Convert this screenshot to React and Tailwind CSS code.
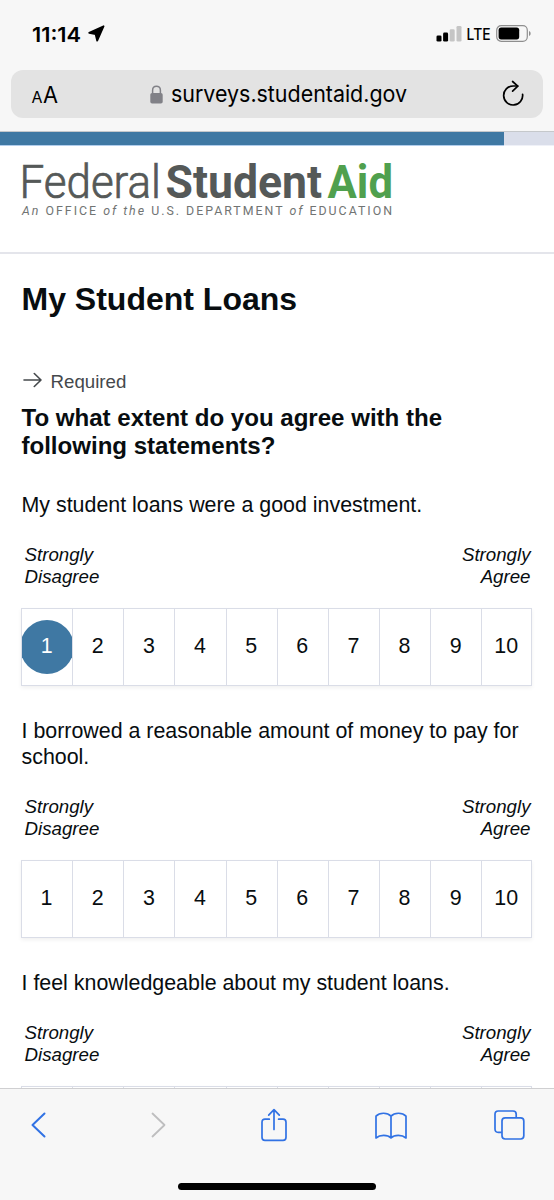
import React from "react"

const questions = [
    { text: "My student loans were a good investment.", selected: 1 },
    { text: "I borrowed a reasonable amount of money to pay for school.", selected: null },
    { text: "I feel knowledgeable about my student loans.", selected: null },
]

const scale = [1, 2, 3, 4, 5, 6, 7, 8, 9, 10]

function StatusBar() {
    return (
        <div className="flex h-[70px] items-center justify-between pl-8 pr-[23px] pt-px font-['Inter',sans-serif] text-black">
            <div className="flex items-center gap-[6px] pb-1">
                <svg className="h-7 w-[50px] overflow-visible" viewBox="0 0 50 28">
                    <text x="0" y="21.5" fontSize="20.6" fontWeight="600" textLength="49" lengthAdjust="spacingAndGlyphs">11:14</text>
                </svg>
                <svg className="h-[17px] w-[17px]" viewBox="0 0 17 17">
                    <path d="M15.6 1.2 1.2 7.9 7.6 9.2 9.2 15.7Z" fill="#000" stroke="#000" strokeWidth="1.8" strokeLinejoin="round" />
                </svg>
            </div>
            <div className="flex items-center pb-1">
                <svg className="h-4 w-[26px]" viewBox="0 0 26 16">
                    <rect x="0.5" y="9.5" width="5" height="6" rx="1.3" />
                    <rect x="7.1" y="6.6" width="5" height="8.9" rx="1.3" />
                    <rect x="13.7" y="3.3" width="5" height="12.2" rx="1.3" fill="#c5c5c5" />
                    <rect x="20.5" y="0" width="5" height="15.5" rx="1.3" fill="#c5c5c5" />
                </svg>
                <svg className="ml-1 h-6 w-6 overflow-visible" viewBox="0 0 24 24">
                    <text x="0.6" y="18" fontSize="16" fontWeight="500" textLength="24" lengthAdjust="spacingAndGlyphs">LTE</text>
                </svg>
                <svg className="ml-[6px] h-[17px] w-[35px]" viewBox="0 0 35 17">
                    <rect x="0.7" y="0.7" width="30.6" height="15.6" rx="4.5" fill="none" stroke="#8e8e8e" strokeWidth="1.2" />
                    <rect x="2.6" y="2.6" width="20.6" height="11.8" rx="2.6" />
                    <path d="M33 6v5c2.2-.8 2.2-4.2 0-5Z" fill="#8e8e8e" />
                </svg>
            </div>
        </div>
    )
}

function AddressBar() {
    return (
        <div className="mx-[11px] flex h-12 items-center justify-between rounded-xl bg-[#e3e3e3] pl-5 pr-[19px] font-['Inter',sans-serif] text-black">
            <svg className="h-8 w-7" viewBox="0 0 28 32">
                <text x="0.5" y="24.5" fontSize="16.5" textLength="11" lengthAdjust="spacingAndGlyphs">A</text>
                <text x="12" y="24.5" fontSize="22.5" textLength="15" lengthAdjust="spacingAndGlyphs">A</text>
            </svg>
            <div className="flex items-center pr-[2px]">
                <svg className="mr-[8px] h-[19px] w-[13px]" viewBox="0 0 13 19">
                    <rect x="0.3" y="8" width="12.4" height="10.5" rx="1.8" fill="#818187" />
                    <path d="M2.6 9V5.2c0-5.4 7.8-5.4 7.8 0V9" fill="none" stroke="#818187" strokeWidth="1.5" />
                </svg>
                <svg className="h-9 w-[238px] overflow-visible" viewBox="0 0 238 36">
                    <text x="0" y="26" fontSize="22.3" textLength="236" lengthAdjust="spacingAndGlyphs">surveys.studentaid.gov</text>
                </svg>
            </div>
            <svg className="mb-[2px] h-[26px] w-[22px]" viewBox="0 0 22 26" fill="none" stroke="#000" strokeWidth="1.7" strokeLinecap="round" strokeLinejoin="round">
                <path d="M20.6 14.4A9.5 9.5 0 1 1 11.1 6H15.7" />
                <path d="M10.6 1.5 15.8 6.2 10.6 11.2" />
            </svg>
        </div>
    )
}

function Logo() {
    return (
        <svg className="h-[60px] w-[376px] overflow-visible font-['Roboto',sans-serif]" viewBox="0 0 376 60">
            <text x="-2.5" y="38" fontSize="45.5" fontWeight="300" fill="#555958" stroke="#555958" strokeWidth="0.7" textLength="141.5" lengthAdjust="spacingAndGlyphs">Federal</text>
            <text x="143.5" y="38" fontSize="45.5" fontWeight="700" fill="#555958" textLength="156.5" lengthAdjust="spacingAndGlyphs">Student</text>
            <text x="305.5" y="38" fontSize="45.5" fontWeight="700" fill="#50a04e" textLength="65.5" lengthAdjust="spacingAndGlyphs">Aid</text>
            <text x="0" y="55" fontSize="12.4" fill="#717473" letterSpacing="2" textLength="372" lengthAdjust="spacingAndGlyphs">
                <tspan fontStyle="italic">An</tspan> OFFICE <tspan fontStyle="italic">of the</tspan> U.S. DEPARTMENT <tspan fontStyle="italic">of</tspan> EDUCATION
            </text>
        </svg>
    )
}

function Question({ text, selected }) {
    return (
        <div>
            <p className="text-[21.4px] leading-[26px]">{text}</p>
            <div className="mt-[26px] flex justify-between pl-[3px] pr-[3.5px] text-[18.7px] italic leading-[21.5px]">
                <span>Strongly<br />Disagree</span>
                <span className="text-right">Strongly<br />Agree</span>
            </div>
            <div className="-ml-[0.5px] mt-[21px] grid h-[78px] w-[511px] grid-cols-[repeat(9,51.15px)_1fr] border-y border-r border-[#dadde7] shadow-[0_2px_4px_rgba(0,0,0,0.06)]">
                {scale.map((n) => (
                    <div
                        key={n}
                        className="flex items-center justify-center overflow-hidden border-l border-[#dadde7] pr-px pb-px text-[21.4px]"
                    >
                        {n === selected ? (
                            <span className="flex h-[54px] w-[54px] shrink-0 items-center justify-center rounded-full bg-[#3f78a3] text-white">{n}</span>
                        ) : (
                            n
                        )}
                    </div>
                ))}
            </div>
        </div>
    )
}

function Toolbar() {
    return (
        <div className="h-28 shrink-0 border-t border-[#cfcfd1] bg-[#f7f7f7]">
            <div className="flex h-[72px] items-center justify-between pl-[22.5px] pr-[29px]">
                <div className="flex w-8 justify-center">
                    <svg className="h-[26px] w-[15px]" viewBox="0 0 15 26" fill="none" stroke="#3172e4" strokeWidth="2" strokeLinecap="round" strokeLinejoin="round">
                        <path d="M13.5 1.5 1.5 13 13.5 24.5" />
                    </svg>
                </div>
                <div className="flex w-8 justify-center pl-1">
                    <svg className="h-[26px] w-[15px]" viewBox="0 0 15 26" fill="none" stroke="#bebebf" strokeWidth="1.8" strokeLinecap="round" strokeLinejoin="round">
                        <path d="M1.5 1.5 13.5 13 1.5 24.5" />
                    </svg>
                </div>
                <div className="flex w-8 justify-center">
                    <svg className="h-[34px] w-[26px]" viewBox="0 0 26 34" fill="none" stroke="#3172e4" strokeWidth="1.7" strokeLinecap="round" strokeLinejoin="round">
                        <path d="M8.3 11.2H4Q1 11.2 1 14.2V29.2Q1 32.4 4 32.4H22Q25 32.4 25 29.2V14.2Q25 11.2 22 11.2H17.6" />
                        <path d="M13 21.5V2M7.7 7.2 13 1.7 18.3 7.2" />
                    </svg>
                </div>
                <svg className="mt-[2px] h-7 w-8" viewBox="0 0 32 28" fill="none" stroke="#3172e4" strokeWidth="1.7" strokeLinecap="round" strokeLinejoin="round">
                    <path d="M16 4.2C12.5.4 4.8.1 1 4.2V26C5 22.5 12.5 22.5 16 26V4.2ZM16 4.2C19.5.4 27.2.1 31 4.2V26C27 22.5 19.5 22.5 16 26" />
                </svg>
                <div className="flex w-8 justify-center">
                    <svg className="h-[30px] w-[31px]" viewBox="0 0 31 30" fill="none" stroke="#3172e4" strokeWidth="1.7">
                        <path d="M7.8 22.3H4.2Q1 22.3 1 19.1V4.2Q1 1 4.2 1H19Q22.2 1 22.2 4.2V7.8" />
                        <rect x="8" y="7.8" width="21.8" height="21.2" rx="3.2" />
                    </svg>
                </div>
            </div>
            <div className="mx-auto mt-[22px] h-[7px] w-[198px] rounded-full bg-black" />
        </div>
    )
}

export default function App() {
    return (
        <div className="flex h-[1200px] w-[554px] flex-col overflow-hidden bg-white font-['Liberation_Sans',Arial,sans-serif] text-[#080d10]">
            <div className="h-[132px] shrink-0 border-b border-[#c5c8cb] bg-[#f7f7f7]">
                <StatusBar />
                <AddressBar />
            </div>

            {/* Survey progress */}
            <div className="h-[14px] shrink-0 border-b border-[#eff1f8] bg-[#dadeea]">
                <div className="h-[14px] w-[504px] border-b border-[#b1cdec] bg-[#3f78a3]" />
            </div>

            <header className="h-[108px] shrink-0 border-b-2 border-[#e4e5eb] pl-[22px] pt-[14px]">
                <Logo />
            </header>

            <main className="min-h-0 flex-1 overflow-hidden pl-[21.5px] pr-5">
                <h1 className="mt-[27px] text-[32px] font-bold leading-9">My Student Loans</h1>
                <div className="mt-[54px] flex h-[22px] items-center gap-[9px] text-[18.7px] text-[#45494c]">
                    <svg className="mb-1 h-4 w-5" viewBox="0 0 20 16" fill="none" stroke="currentColor" strokeWidth="1.6" strokeLinecap="round" strokeLinejoin="round">
                        <path d="M2 8H19M12.3 1.5 19 8 12.3 14.5" />
                    </svg>
                    Required
                </div>
                <h2 className="mt-[11px] text-[24.1px] font-bold leading-7 tracking-[-0.02px]">
                    To what extent do you agree with the following statements?
                </h2>
                <div className="mt-8 flex flex-col gap-8">
                    {questions.map((q) => (
                        <Question key={q.text} {...q} />
                    ))}
                </div>
            </main>

            <Toolbar />
        </div>
    )
}
